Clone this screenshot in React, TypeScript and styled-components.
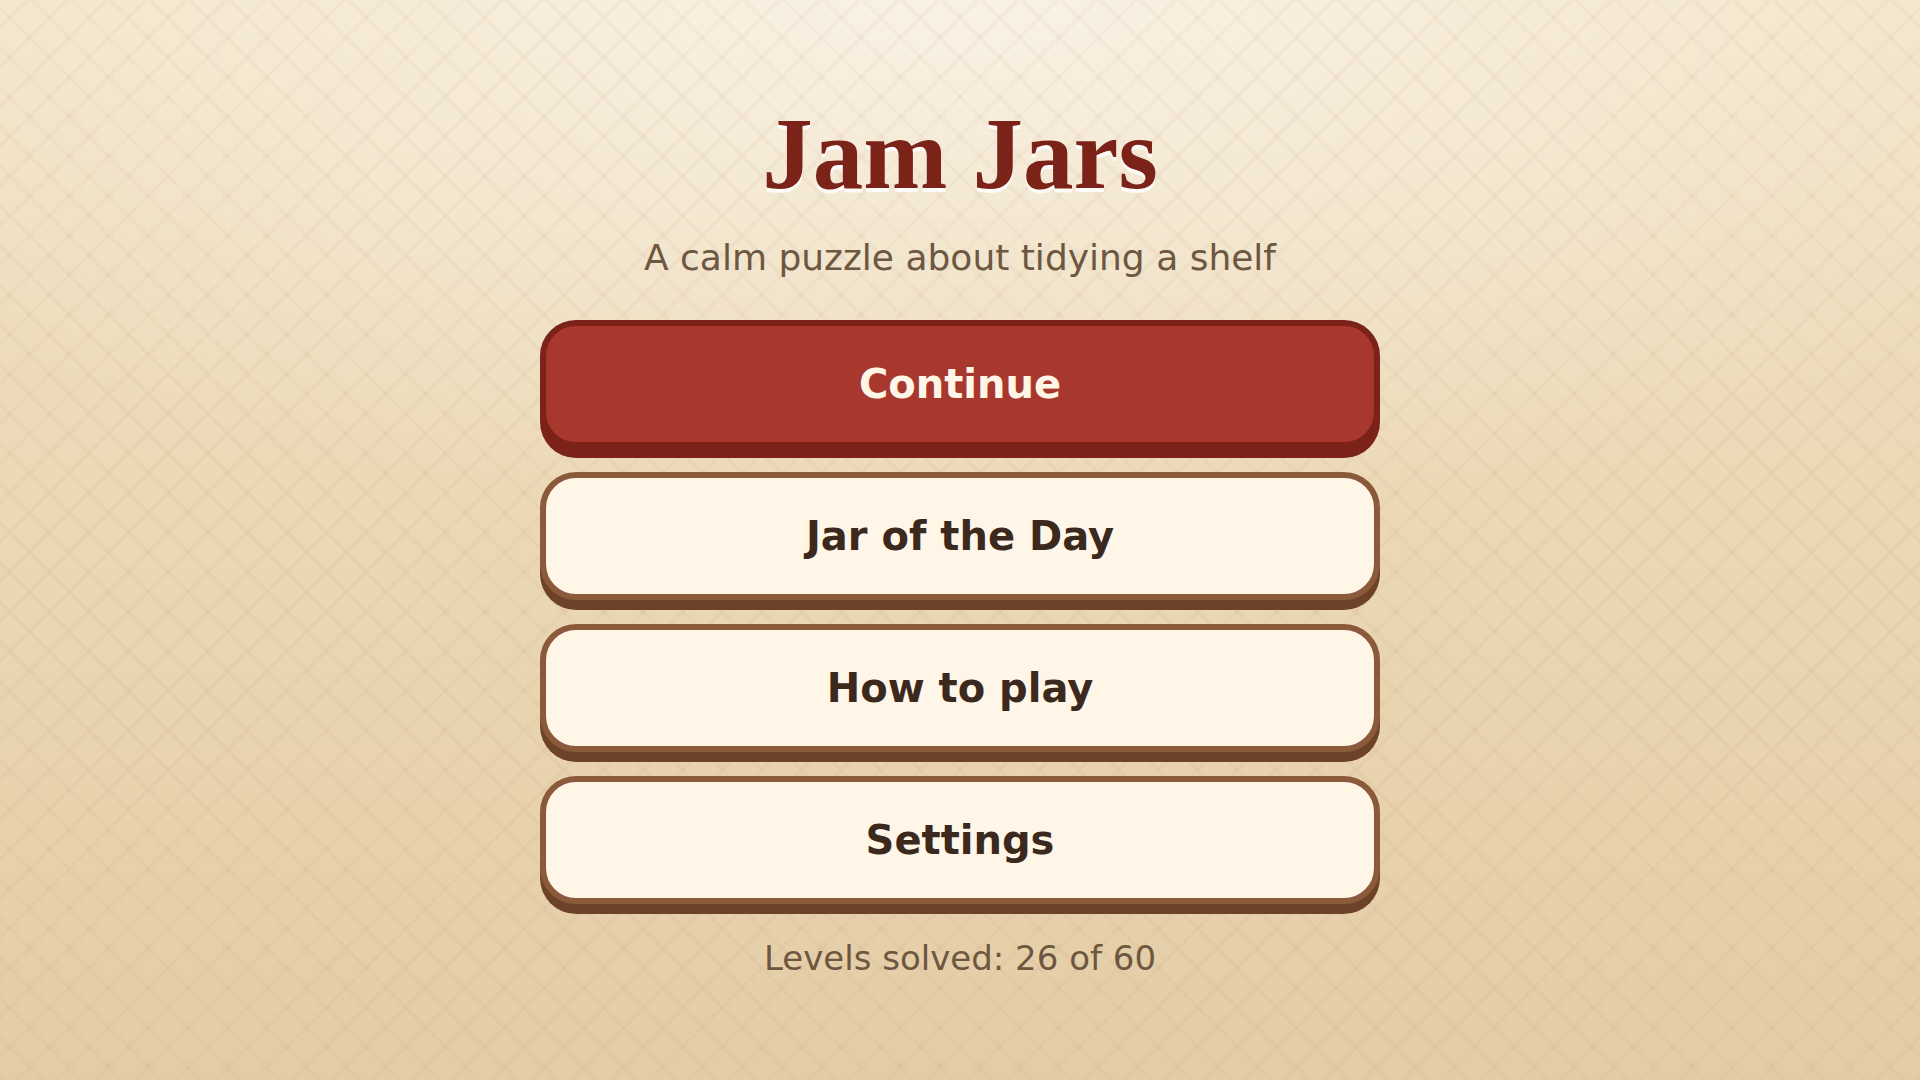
import React from "react";
import styled, { createGlobalStyle } from "styled-components";

const GlobalStyle = createGlobalStyle`
  *, *::before, *::after { box-sizing: border-box; }
  body { margin: 0; }
`;

const Screen = styled.main`
  min-height: 100vh;
  display: flex;
  flex-direction: column;
  align-items: center;
  justify-content: center;
  gap: 24px;
  padding: 32px;
  color: #3b291e;
  font-family: "DejaVu Sans", sans-serif;
  background:
    repeating-linear-gradient(45deg, rgba(139, 90, 60, 0.04) 0 4px, transparent 4px 28px),
    repeating-linear-gradient(-45deg, rgba(139, 90, 60, 0.04) 0 4px, transparent 4px 28px),
    radial-gradient(120% 80% at 50% 0%, rgba(255, 255, 255, 0.55), transparent 60%),
    linear-gradient(180deg, #f2e2c4 0%, #e4cda5 100%);
`;

const Title = styled.h1`
  margin: 0;
  color: #7b2319;
  font: bold 101px/112px "Liberation Serif", serif;
  text-shadow: 0 4px 0 rgba(255, 255, 255, 0.8);
`;

const Note = styled.p<{ $size: number }>`
  margin: 0;
  color: #6e5740;
  font-size: ${(p) => p.$size}px;
  line-height: 48px;
`;

const Menu = styled.nav`
  width: 100%;
  max-width: 840px;
  display: flex;
  flex-direction: column;
  gap: 24px;
  padding: 14px 0 6px;
`;

const MenuButton = styled.button<{ $primary?: boolean }>`
  min-height: 128px;
  border: 6px solid ${(p) => (p.$primary ? "#7b2319" : "#8b5a3a")};
  border-radius: 36px;
  background: ${(p) => (p.$primary ? "#a8382e" : "#fff6e7")};
  box-shadow: 0 10px 0 ${(p) => (p.$primary ? "#7b2319" : "#6e4228")};
  color: ${(p) => (p.$primary ? "#fff6e7" : "#3b291e")};
  font: bold 40px "DejaVu Sans", sans-serif;
  cursor: pointer;
`;

export default function App() {
  return (
    <>
      <GlobalStyle />
      <Screen>
        <Title>Jam Jars</Title>
        <Note $size={36}>A calm puzzle about tidying a shelf</Note>
        <Menu>
          <MenuButton $primary>Continue</MenuButton>
          <MenuButton>Jar of the Day</MenuButton>
          <MenuButton>How to play</MenuButton>
          <MenuButton>Settings</MenuButton>
        </Menu>
        <Note $size={34}>Levels solved: 26 of 60</Note>
      </Screen>
    </>
  );
}
